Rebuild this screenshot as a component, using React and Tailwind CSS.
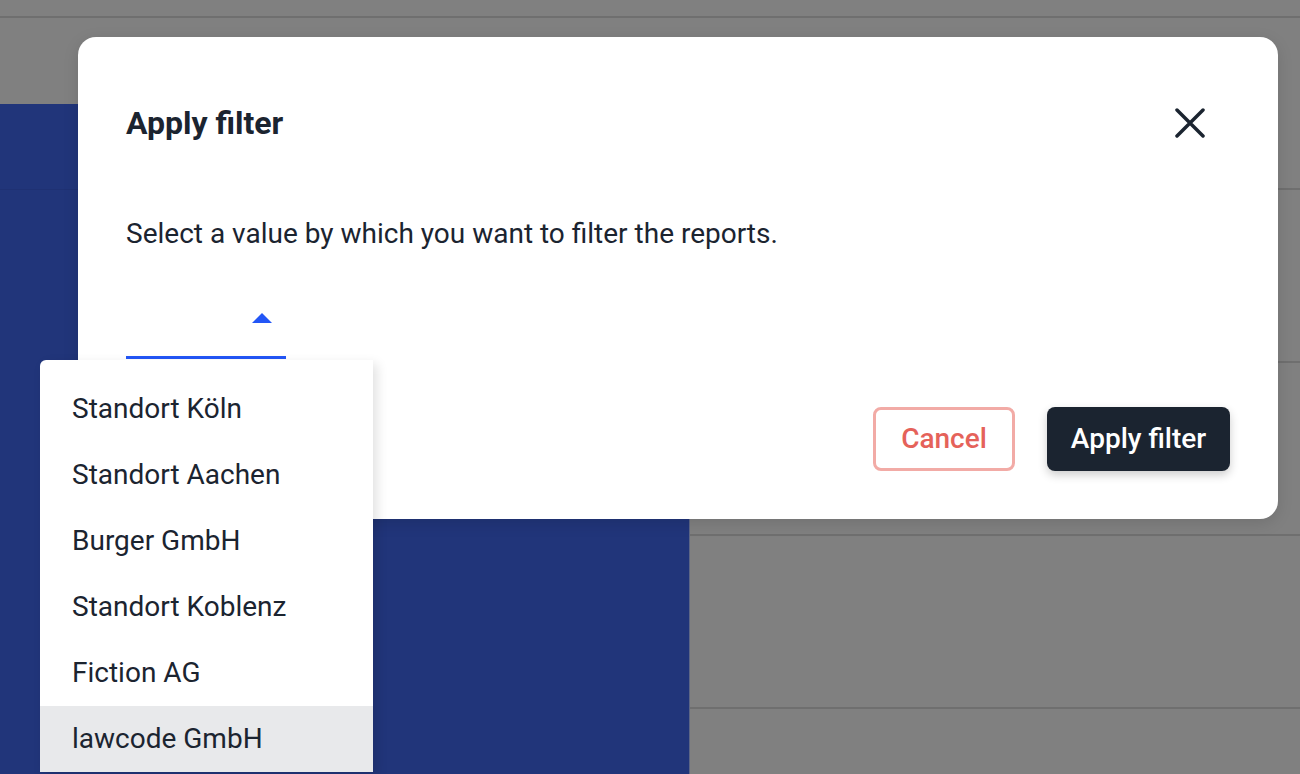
import { useState } from 'react';

const options = [
  'Standort Köln',
  'Standort Aachen',
  'Burger GmbH',
  'Standort Koblenz',
  'Fiction AG',
  'lawcode GmbH',
];

export default function App() {
  const [hovered] = useState('lawcode GmbH');

  return (
    <div className="relative w-[1300px] h-[774px] overflow-hidden bg-[#808080] font-['Roboto',sans-serif]">
      {/* dimmed page behind the dialog */}
      <div className="h-[18px] border-b-2 border-[#6f6f6f]" />
      <div className="flex h-[756px]">
        <div className="w-[690px] flex flex-col">
          <div className="h-[86px]" />
          <div className="flex-1 bg-[#21357a] border-r border-[#5d6685]">
            <div className="h-[86px] border-b border-[#1f3173]" />
          </div>
        </div>
        <div className="flex-1 flex flex-col">
          <div className="h-[172px] border-b-2 border-[#6f6f6f]" />
          <div className="h-[173px] border-b-2 border-[#6f6f6f]" />
          <div className="h-[173px] border-b-2 border-[#6f6f6f]" />
          <div className="h-[173px] border-b-2 border-[#6f6f6f]" />
        </div>
      </div>

      {/* Dialog */}
      <div className="absolute left-[78px] top-[37px] w-[1200px] h-[482px] bg-white rounded-[18px] shadow-[0_4px_16px_rgba(0,0,0,0.12)] p-12 flex flex-col text-[#1b2430]">
        <div className="h-[76px] flex items-center justify-between">
          <h2 className="text-[32px] font-bold leading-none">Apply filter</h2>
          <button className="w-[56px] h-[56px] mr-[12px] flex items-center justify-center">
            <svg width="30" height="30" viewBox="0 0 30 30" fill="none">
              <path d="M2 2L28 28M28 2L2 28" stroke="#1b2430" strokeWidth="3.5" strokeLinecap="round" />
            </svg>
          </button>
        </div>

        <p className="mt-[53px] h-[40px] leading-[40px] text-[28px] text-[#1b2430]">
          Select a value by which you want to filter the reports.
        </p>

        <div className="mt-[49px] w-[160px] h-[56px] border-b-[3px] border-[#2356f6] flex justify-end items-start pt-[10px] pr-[14px]">
          <svg width="20" height="10" viewBox="0 0 20 10">
            <path d="M0 10L10 0L20 10Z" fill="#2356f6" />
          </svg>
        </div>

        <div className="mt-[48px] flex justify-end gap-8">
          <button className="h-[64px] w-[142px] rounded-[8px] border-[3px] border-[#f2aba6] text-[#e5625a] text-[28px] font-medium">
            Cancel
          </button>
          <button className="h-[64px] w-[183px] rounded-[8px] bg-[#1b2430] text-white text-[28px] font-medium shadow-[0_4px_10px_rgba(0,0,0,0.2)]">
            Apply filter
          </button>
        </div>
      </div>

      {/* Select menu */}
      <ul className="absolute left-[40px] top-[360px] w-[333px] bg-white rounded-tl-[6px] pt-[16px] shadow-[4px_4px_12px_rgba(0,0,0,0.12)]">
        {options.map((o) => (
          <li
            key={o}
            className={`h-[66px] flex items-center pl-[32px] text-[28px] text-[#1b2430] ${o === hovered ? 'bg-[#e8e9eb]' : ''}`}
          >
            {o}
          </li>
        ))}
      </ul>
    </div>
  );
}
